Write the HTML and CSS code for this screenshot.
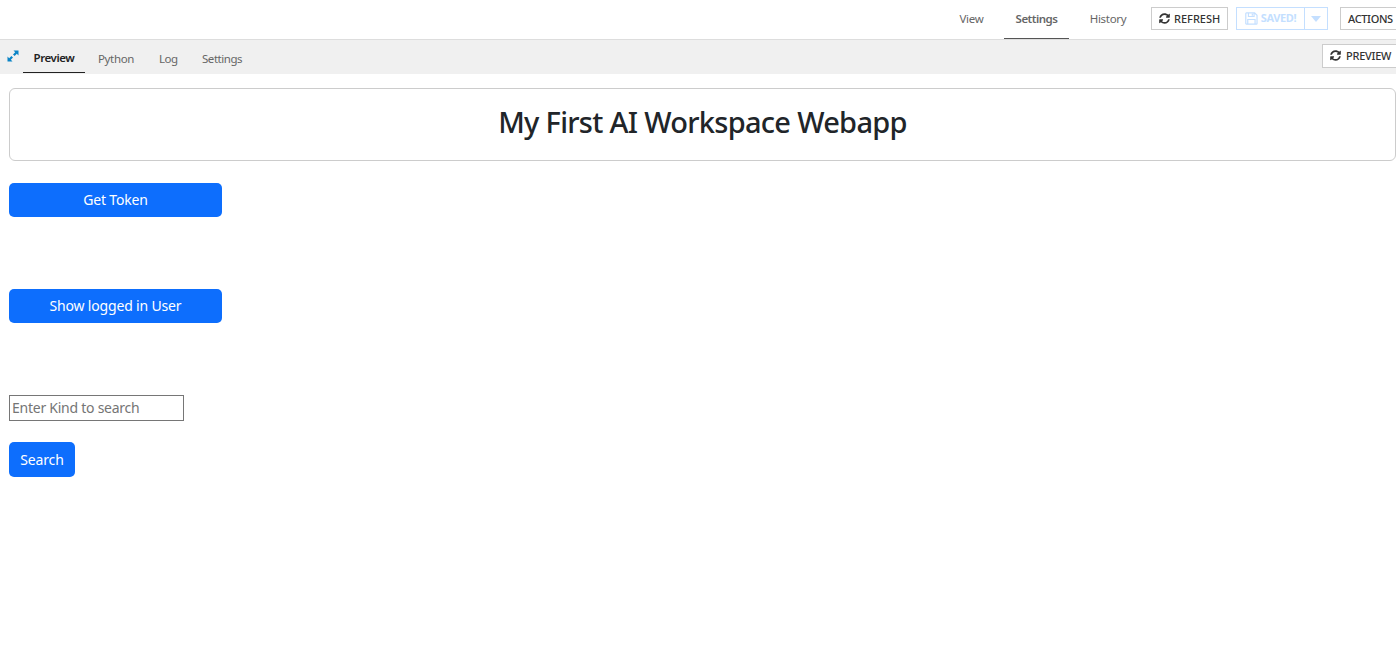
FILE: index.html
```html
<!DOCTYPE html>
<html lang="en">
<head>
<meta charset="utf-8">
<title>My First AI Workspace Webapp</title>
<link rel="stylesheet" href="styles.css">
</head>
<body>
<svg class="defs" width="0" height="0">
  <symbol id="refresh" viewBox="0 0 512 512"><path d="M370.7 133.3C339.500 104 298.900 88 255.800 88c-77.500.1-144.300 53.200-162.800 126.900-1.300 5.400-6.100 9.100-11.700 9.100H24.100c-7.500 0-13.200-6.800-11.800-14.200C33.900 94.900 134.800 8 256 8c66.400 0 126.800 26.100 171.300 68.700L463 41C478.100 25.900 504 36.600 504 57.900V192c0 13.300-10.700 24-24 24H345.900c-21.400 0-32.100-25.900-17-41l41.800-41.700zM32 296h134.100c21.400 0 32.100 25.900 17 41l-41.800 41.800c31.300 29.300 71.800 45.300 114.900 45.200 77.400-.1 144.300-53.100 162.800-126.800 1.300-5.400 6.100-9.100 11.700-9.100h57.300c7.500 0 13.200 6.800 11.800 14.200C478.100 417.100 377.200 504 256 504c-66.400 0-126.800-26.100-171.300-68.700L49 471c-15.100 15.100-41 4.400-41-16.900V320c0-13.300 10.700-24 24-24z"/></symbol>
</svg>
<header class="topbar">
  <nav class="topnav">
    <a class="top-view">View</a>
    <a class="top-settings">Settings</a>
    <a class="top-history">History</a>
  </nav>
  <div class="btn refresh"><svg class="icon"><use href="#refresh"/></svg><span>REFRESH</span></div>
  <div class="btn saved">
    <svg class="save-icon" viewBox="0 0 13 13"><path d="M1.500.8h8.200l2.500 2.500v8.200q0 .7-.7.7h-10q-.7 0-.7-.7v-10q0-.7.7-.7zM3.500.8v3.700h5.700V.8M7.400 1.700v2M2.800 12V7.500h7.400V12"/></svg>
    <span>SAVED!</span>
    <div class="split"><i class="caret"></i></div>
  </div>
  <div class="btn actions"><span>ACTIONS</span></div>
</header>
<div class="subbar">
  <svg class="expand" viewBox="0 0 12 12"><path d="M6.500.5h5v5L9.800 3.800 7.600 6 6 4.400l2.200-2.200zM.5 6.500v5h5L3.800 9.800 6 7.600 4.400 6 2.200 8.200z"/></svg>
  <nav class="tabs">
    <a class="tab-preview">Preview</a>
    <a class="tab-python">Python</a>
    <a class="tab-log">Log</a>
    <a class="tab-settings">Settings</a>
  </nav>
  <div class="btn preview"><svg class="icon"><use href="#refresh"/></svg><span>PREVIEW</span></div>
</div>
<main>
  <h1>My First AI Workspace Webapp</h1>
  <button class="primary token">Get Token</button>
  <button class="primary user">Show logged in User</button>
  <input class="kind" type="text" placeholder="Enter Kind to search">
  <button class="primary search">Search</button>
</main>
</body>
</html>
```
FILE: styles.css
```css
* { box-sizing: border-box; }
body { margin: 0; background: #fff; font-family: "Noto Sans", sans-serif; overflow: hidden; }
.defs { display: block; height: 0; }

.topbar { height: 40px; border-bottom: 1px solid #ddd; display: flex; align-items: flex-start; justify-content: flex-end; }
.topnav { display: flex; height: 39px; font-size: 11.5px; line-height: 38px; color: #666; }
.topnav a { white-space: nowrap; text-align: center; height: 39px; }
.top-view { width: 65px; letter-spacing: -0.25px; }
.top-settings { width: 65px; font-weight: 600; border-bottom: 1px solid #555; letter-spacing: -0.5px; }
.top-history { width: 78px; letter-spacing: -0.3px; }

.btn { display: flex; align-items: center; flex: none; white-space: nowrap; border: 1px solid #ccc; background: #fff; color: #333; font-size: 11px; font-weight: 500; height: 23px; margin-top: 7px; line-height: 21px; }
.icon { width: 11px; height: 11px; margin-right: 4px; fill: #333; }
.refresh { width: 77px; margin-left: 4px; padding-left: 7px; letter-spacing: 0; }
.saved { width: 92px; margin-left: 8px; padding-left: 8px; color: #c4dfff; border-color: #c4dfff; font-weight: 700; letter-spacing: -0.4px; }
.saved span { width: 44px; position: relative; top: -1px; }
.save-icon { width: 13px; height: 13px; margin-right: 3px; fill: none; stroke: #c4dfff; stroke-width: 1.2; }
.split { width: 23px; height: 21px; border-left: 1px solid #c4dfff; display: flex; justify-content: center; align-items: center; }
.caret { border: 5px solid transparent; border-top: 6px solid #c4dfff; border-bottom: 0; }
.actions { width: 56px; margin-left: 12px; padding-left: 7px; border-right: 0; letter-spacing: -0.35px; }

.subbar { height: 34px; background: #f0f0f0; display: flex; align-items: flex-start; }
.expand { width: 12px; height: 12px; margin: 10px 4px 0 7px; fill: #0a84c6; }
.tabs { display: flex; font-size: 11.5px; line-height: 38px; color: #666; letter-spacing: -0.45px; }
.tabs a { white-space: nowrap; height: 33px; }
.tab-preview { width: 62px; text-align: center; color: #222; font-weight: 600; line-height: 36px; border-bottom: 1px solid #222; letter-spacing: -0.45px; }
.tab-python { margin-left: 13px; width: 61px; letter-spacing: -0.35px; }
.tab-log { width: 43px; }
.preview { width: 74px; height: 24px; margin: 4px 0 0 auto; padding: 0 0 2px 7px; border-right: 0; letter-spacing: -0.25px; }
.preview .icon { margin-right: 5px; }

main { padding: 14px 0 0 9px; display: flex; flex-direction: column; align-items: flex-start; }
h1 { margin: 0 0 22px; width: 100%; height: 73px; border: 1px solid #ccc; border-radius: 6px; text-align: center; color: #212529; font-size: 29px; font-weight: 500; line-height: 66px; letter-spacing: -0.7px; }
.primary { border: 0; padding: 0; border-radius: 5px; background: #0d6efd; color: #fff; font: 400 14px/34px "Noto Sans", sans-serif; height: 34px; white-space: nowrap; letter-spacing: -0.17px; }
.token { width: 213px; }
.user { width: 213px; margin-top: 72px; }
.kind { margin-top: 72px; width: 175px; height: 26px; border: 1px solid #767676; border-radius: 0; padding: 0 1px 2px 2px; font: 400 14px "Noto Sans", sans-serif; letter-spacing: -0.25px; color: #212529; }
.kind::placeholder { color: #757575; opacity: 1; }
.search { width: 66px; height: 35px; margin-top: 21px; }
```
